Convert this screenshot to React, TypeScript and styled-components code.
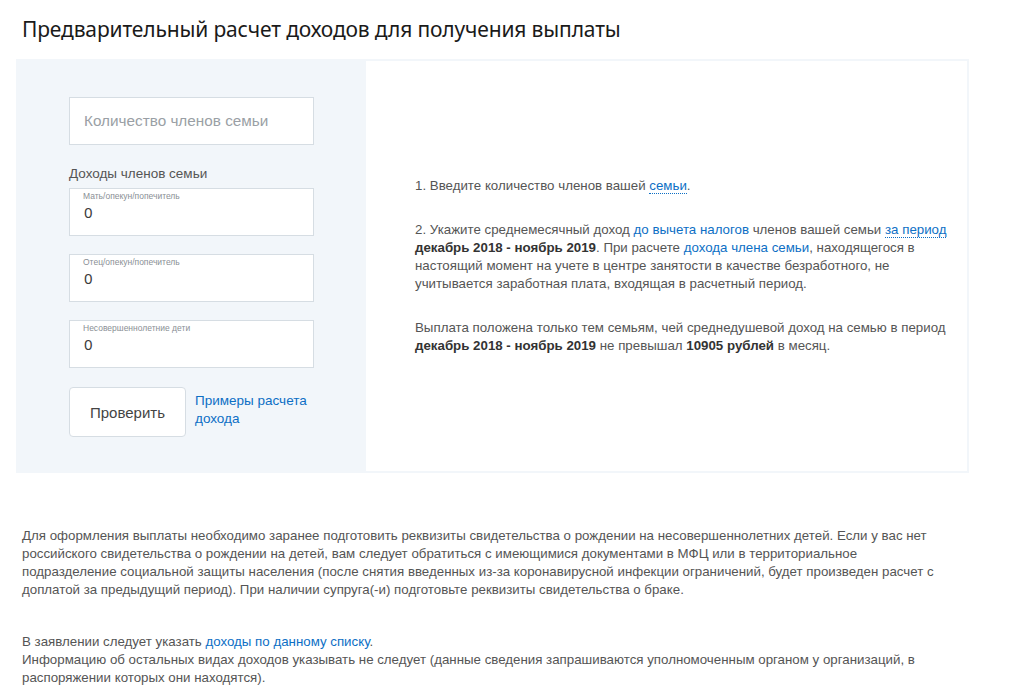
import React from "react";
import styled, { createGlobalStyle } from "styled-components";

const Global = createGlobalStyle`
  html, body { margin: 0; padding: 0; background: #fff; }
  body { font-family: "Liberation Sans", Arial, sans-serif; color: #555; }
  * { box-sizing: border-box; }
`;

const Page = styled.div`
  width: 1024px;
  padding: 15px 0 0 16px;
`;

const Title = styled.h1`
  margin: 0 0 0 6px;
  height: 44px;
  font-family: "Noto Sans", "Open Sans", sans-serif;
  font-weight: 400;
  font-size: 21px;
  line-height: 28px;
  color: #1a1a1a;
  letter-spacing: -0.15px;
`;

const Card = styled.div`
  display: flex;
  width: 953px;
  height: 414px;
  border: 2px solid #f2f6fa;
`;

const FormPanel = styled.div`
  width: 348px;
  flex: none;
  background: #f2f6fa;
  padding: 36px 0 0 51px;
  display: flex;
  flex-direction: column;
`;

const InfoPanel = styled.div`
  flex: 1;
  padding: 0 10px 0 49px;
  display: flex;
  flex-direction: column;
  justify-content: center;
  font-size: 13.3px;
  line-height: 18px;
  color: #555;
`;

const Field = styled.div<{ $h?: number }>`
  width: 245px;
  height: ${(p) => p.$h ?? 48}px;
  background: #fff;
  border: 1px solid #d6dde3;
  display: flex;
  flex-direction: column;
`;

const Placeholder = styled.div`
  padding: 14px 0 0 14px;
  font-size: 15.3px;
  color: #9a9fa5;
`;

const SmallLabel = styled.div`
  padding: 2px 0 0 13px;
  font-size: 8.5px;
  line-height: 11px;
  color: #8a8f95;
`;

const Value = styled.div`
  padding: 1px 0 0 14px;
  font-family: "Noto Sans", sans-serif;
  font-size: 15px;
  line-height: 18px;
  color: #3a3a3a;
`;

const GroupLabel = styled.div`
  margin: 20px 0 6px 0;
  font-size: 13.5px;
  line-height: 17px;
  color: #555;
`;

const Stack = styled.div`
  display: flex;
  flex-direction: column;
  gap: 18px;
`;

const Actions = styled.div`
  display: flex;
  align-items: center;
  gap: 9px;
  margin-top: 19px;
`;

const Button = styled.button`
  width: 117px;
  height: 50px;
  background: #fff;
  border: 1px solid #d6dde3;
  border-radius: 4px;
  font-family: "Liberation Sans", Arial, sans-serif;
  font-size: 15px;
  color: #444;
  padding: 0;
`;

const Link = styled.a<{ $dotted?: boolean }>`
  color: #0d6fc5;
  text-decoration: none;
  ${(p) => (p.$dotted ? "border-bottom: 1px dotted #0d6fc5;" : "")}
`;

const SideLink = styled(Link)`
  font-size: 13.5px;
  line-height: 18px;
  margin-top: -4px;
`;

const Para = styled.p<{ $gap?: number }>`
  margin: 0 0 ${(p) => p.$gap ?? 26}px 0;
  &:last-child { margin-bottom: 0; }
  b { color: #333; }
`;

const Notes = styled.div`
  width: 936px;
  padding: 54px 0 0 6px;
  font-size: 13.3px;
  line-height: 18px;
  color: #555;
`;

export default function App() {
  return (
    <>
      <Global />
      <Page>
        <Title>Предварительный расчет доходов для получения выплаты</Title>
        <Card>
          <FormPanel>
            <Field $h={48}>
              <Placeholder>Количество членов семьи</Placeholder>
            </Field>
            <GroupLabel>Доходы членов семьи</GroupLabel>
            <Stack>
              {["Мать/опекун/попечитель", "Отец/опекун/попечитель", "Несовершеннолетние дети"].map((l) => (
                <Field key={l}>
                  <SmallLabel>{l}</SmallLabel>
                  <Value>0</Value>
                </Field>
              ))}
            </Stack>
            <Actions>
              <Button>Проверить</Button>
              <SideLink href="#">
                Примеры расчета
                <br />
                дохода
              </SideLink>
            </Actions>
          </FormPanel>
          <InfoPanel>
            <Para>
              1. Введите количество членов вашей <Link $dotted href="#">семьи</Link>.
            </Para>
            <Para>
              2. Укажите среднемесячный доход <Link href="#">до вычета налогов</Link> членов вашей семьи{" "}
              <Link $dotted href="#">за период</Link> <b>декабрь 2018 - ноябрь 2019</b>. При расчете{" "}
              <Link href="#">дохода члена семьи</Link>, находящегося в настоящий момент на учете в центре
              занятости в качестве безработного, не учитывается заработная плата, входящая в расчетный период.
            </Para>
            <Para>
              Выплата положена только тем семьям, чей среднедушевой доход на семью в период{" "}
              <b>декабрь 2018 - ноябрь 2019</b> не превышал <b>10905 рублей</b> в месяц.
            </Para>
          </InfoPanel>
        </Card>
        <Notes>
          <Para $gap={34}>
            Для оформления выплаты необходимо заранее подготовить реквизиты свидетельства о рождении на
            несовершеннолетних детей. Если у вас нет российского свидетельства о рождении на детей, вам следует
            обратиться с имеющимися документами в МФЦ или в территориальное подразделение социальной защиты
            населения (после снятия введенных из-за коронавирусной инфекции ограничений, будет произведен расчет с
            доплатой за предыдущий период). При наличии супруга(-и) подготовьте реквизиты свидетельства о браке.
          </Para>
          <Para>
            В заявлении следует указать <Link href="#">доходы по данному списку</Link>.
            <br />
            Информацию об остальных видах доходов указывать не следует (данные сведения запрашиваются
            уполномоченным органом у организаций, в распоряжении которых они находятся).
          </Para>
        </Notes>
      </Page>
    </>
  );
}
